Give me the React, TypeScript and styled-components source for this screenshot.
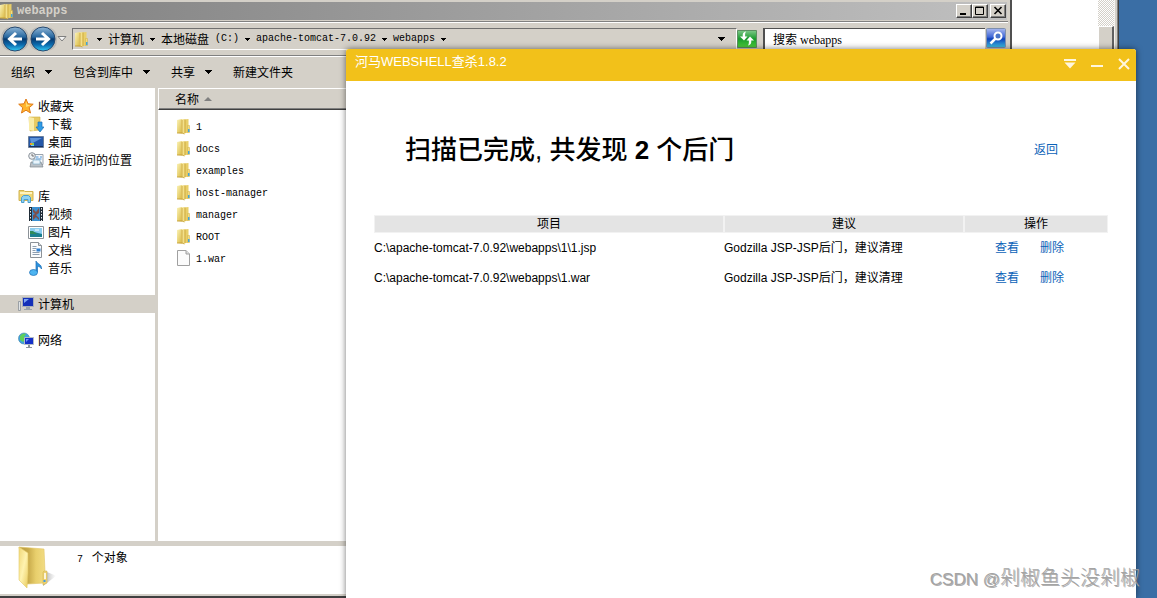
import React from "react";
import styled, { createGlobalStyle, css } from "styled-components";

const face = "#d4d0c8";
const cjk = `"Noto Sans CJK SC", sans-serif`;

const GlobalStyle = createGlobalStyle`
  * { box-sizing: border-box; }
  body { margin: 0; font: 12px/18px ${cjk}; color: #000; }
  button { border: 0; padding: 0; background: none; font: inherit; color: inherit; }
  ul { list-style: none; margin: 0; padding: 0; }
  svg { display: block; flex: none; }
`;

const Desktop = styled.main`
  position: relative;
  min-height: 100vh;
  overflow: hidden;
  background: #3a6ea5;
`;

const Mono = styled.span`
  font-family: "Liberation Mono", ${cjk};
  font-size: 10px;
  white-space: pre;
`;

/* Window at the very back, only its scrollbar edge shows */
const BackWindow = styled.section`
  position: absolute;
  inset: 0 38px 0 50%;
  display: flex;
  justify-content: flex-end;
  background: #fff;
  border-right: 1px solid #404040;
`;
const ScrollTrack = styled.div`
  width: 16px;
  padding-top: 26px;
  background: repeating-conic-gradient(${face} 0 25%, #fff 0 50%) 0 0 / 2px 2px;
`;
const ScrollThumb = styled.div`
  height: 100%;
  background: ${face};
  border: 1px solid #fff;
  border-right: 2px solid #606060;
`;
const BackEdge = styled.div`
  width: 4px;
  background: linear-gradient(90deg, #f4f2ee 0 1px, ${face} 1px 3px, #808080 3px);
`;

/* File explorer */
const Explorer = styled.section`
  position: absolute;
  inset: 0 145px 0 0;
  display: flex;
  flex-direction: column;
  background: ${face};
  padding: 2px 2px 2px 0;
  border-right: 2px solid #505050;
  border-bottom: 2px solid #404040;
`;
const TitleBar = styled.header`
  display: flex;
  align-items: center;
  height: 18px;
  margin-right: 1px;
  padding-right: 1px;
  background: linear-gradient(90deg, #808080, #c0c0c0);
`;
const TitleText = styled.h1`
  flex: 1;
  margin: 0 0 0 4px;
  font: bold 12px/18px "Liberation Mono", monospace;
  color: ${face};
`;
const CaptionButton = styled.button<{ $apart?: boolean }>`
  width: 16px;
  height: 14px;
  margin-left: ${(p) => (p.$apart ? 2 : 0)}px;
  background: ${face};
  border: 1px solid;
  border-color: #fff #404040 #404040 #fff;
  box-shadow: inset -1px -1px #808080;
`;
const etched = css`
  border-top: 1px solid #808080;
  box-shadow: inset 0 1px #fff;
`;
const AddressRow = styled.div`
  ${etched}
  display: flex;
  align-items: flex-start;
  height: 34px;
  margin-top: 1px;
  padding: 6px 2px 0 0;
`;
const NavButtons = styled.div`
  display: flex;
  align-items: center;
  width: 72px;
  height: 22px;
  padding-left: 1px;
`;
const AddressBox = styled.nav`
  display: flex;
  flex: 1;
  align-items: center;
  gap: 1px;
  height: 22px;
  padding-left: 2px;
  border: 1px solid;
  border-color: #707070 #fff #fff #707070;
  overflow: hidden;
  white-space: nowrap;
`;
const Crumb = styled.button`
  display: flex;
  align-items: center;
  height: 18px;
`;
const ArrowCell = styled.span<{ $first?: boolean }>`
  display: flex;
  justify-content: center;
  width: 16px;
  margin-left: ${(p) => (p.$first ? 2 : 0)}px;
`;
const DropButton = styled.button`
  margin: 0 11px 0 auto;
`;
const SquareButton = styled.button`
  width: 20px;
  height: 20px;
`;
const SearchField = styled.input`
  width: 222px;
  height: 21px;
  margin: 0 1px 0 6px;
  padding: 0 8px;
  border: 0 solid #505050;
  border-width: 1px 0 0 2px;
  background: #fff;
  color: #000;
  font: 12px/18px "Liberation Serif", ${cjk};
  outline: none;
`;
const Toolbar = styled.div`
  ${etched}
  display: flex;
  align-items: center;
  gap: 21px;
  height: 33px;
  padding: 0 11px;
`;
const ToolButton = styled.button`
  display: flex;
  align-items: center;
  gap: 9px;
  white-space: nowrap;
`;
const ExplorerBody = styled.div`
  display: flex;
  flex: 1;
  min-height: 0;
`;
const Tree = styled.nav`
  display: flex;
  flex-direction: column;
  gap: 18px;
  width: 158px;
  padding-top: 9px;
  background: #fff;
  border-right: 3px solid ${face};
`;
const TreeItem = styled.li<{ $level?: number; $selected?: boolean }>`
  display: flex;
  align-items: center;
  gap: 4px;
  height: 18px;
  padding-left: ${(p) => (p.$level ? 28 : 18)}px;
  background: ${(p) => (p.$selected ? face : "transparent")};
`;
const Files = styled.section`
  flex: 1;
  background: #fff;
`;
const ColumnHeader = styled.button`
  display: flex;
  align-items: center;
  gap: 5px;
  width: 100%;
  height: 22px;
  padding-left: 16px;
  background: ${face};
  border: 1px solid;
  border-color: #fff ${face} #404040 #fff;
  box-shadow: inset 0 -1px #808080;
`;
const FileList = styled.ul`
  padding: 5px 0 0 19px;
`;
const FileItem = styled.li`
  display: flex;
  align-items: center;
  gap: 6px;
  height: 22px;
`;
const FileName = styled(Mono)`
  padding-top: 4px;
`;
const Details = styled.footer`
  display: flex;
  gap: 20px;
  height: 53px;
  padding-left: 17px;
  background: #fff;
  border-top: 5px solid ${face};
`;
const DetailsText = styled.p`
  margin: 2px 0 0;
`;

/* Scanner */
const Scanner = styled.section`
  position: absolute;
  inset: 49px 21px 0 346px;
  background: #fff;
  border-radius: 3px 3px 0 0;
  box-shadow: 0 0 6px rgba(0, 0, 0, 0.55);
  font-family: "Liberation Sans", ${cjk};
`;
const ScannerBar = styled.header`
  display: flex;
  align-items: center;
  gap: 13px;
  height: 32px;
  padding: 0 5px 2px 9px;
  background: #f2c11a;
  border-radius: 3px 3px 0 0;
  color: #fff;
`;
const ScannerTitle = styled.h2`
  flex: 1;
  margin: 0;
  padding-bottom: 4px;
  font-size: 13px;
  font-weight: 400;
  line-height: 20px;
`;
const Summary = styled.div`
  display: flex;
  align-items: center;
  justify-content: space-between;
  padding: 51px 78px 47px 59px;
`;
const Headline = styled.h3`
  margin: 0;
  font-size: 26px;
  font-weight: 500;
  line-height: 36px;
  white-space: nowrap;
`;
const Link = styled.a`
  color: #0b62b8;
  text-decoration: none;
`;
const Actions = styled.div`
  display: flex;
  gap: 21px;
  padding-left: 31px;
`;
const Results = styled.table`
  width: calc(100% - 56px);
  margin: 0 28px;
  border-collapse: separate;
  border-spacing: 0;
  table-layout: fixed;
`;
const HeadCell = styled.th<{ $width?: number }>`
  width: ${(p) => (p.$width ? `${p.$width}px` : "auto")};
  height: 17px;
  padding: 0;
  background: #e4e4e4;
  border: 1px solid #f2f2f2;
  font-weight: 400;
  line-height: 16px;
`;
const Cell = styled.td`
  height: 30px;
  padding: 0;
  white-space: nowrap;
`;
const Watermark = styled.p`
  position: absolute;
  right: 17px;
  bottom: 4px;
  margin: 0;
  font-size: 20px;
  font-weight: 300;
  line-height: 28px;
  color: #a4a4a4;
  text-shadow: 1px 1px 0 rgba(110, 110, 110, 0.55);
`;
const WatermarkLatin = styled.span`
  font-family: "Liberation Sans", sans-serif;
  font-size: 17px;
`;

const Down = ({ size = 6 }: { size?: number }) => (
  <svg width={size} height={size / 2} viewBox="0 0 8 4" shapeRendering="crispEdges">
    <path d="M0 0h8L4 4z" />
  </svg>
);

const FolderIcon = () => (
  <svg width="13" height="17" viewBox="0 0 13 17">
    <defs>
      <linearGradient id="folderFront" x1="0" x2="1" y1="0" y2="1">
        <stop offset="0" stopColor="#fbf3b8" />
        <stop offset="1" stopColor="#d9b83f" />
      </linearGradient>
    </defs>
    <path d="M0 2 5 1v14.500L0 15z" fill="url(#folderFront)" />
    <path d="M7 1.500 11.500 1v13.500L7 15.500z" fill="#e9cf69" />
    <path d="M4.500 1.500 7.500 1v15l-3-1z" fill="#f3e08a" />
    <path d="M5 2v13M8 1.500V15" stroke="#c6a238" strokeWidth=".8" />
    <path d="M0 15h5l2.500 1" fill="none" stroke="#c09a30" strokeWidth=".8" />
    <path d="M10.500 7.500h2v7h-2z" fill="#f2dc80" stroke="#cfae45" strokeWidth=".5" />
    <path d="M11 11h1.500v3H11z" fill="#3fa4e0" />
  </svg>
);

const FileIcon = () => (
  <svg width="13" height="16" viewBox="0 0 13 16">
    <path d="M.5.5h8.500l3.500 3.500v11.500H.5z" fill="#fbfbfb" stroke="#a0a0a0" />
    <path d="M9 .5V4h3.500" fill="#ddd" stroke="#a0a0a0" />
  </svg>
);

const BigFolder = () => (
  <svg width="40" height="44" viewBox="0 0 40 44">
    <defs>
      <linearGradient id="flap" x1="0" x2="1" y1="0" y2="1">
        <stop offset="0" stopColor="#f0d777" />
        <stop offset=".5" stopColor="#fff3b0" />
        <stop offset="1" stopColor="#e9cb5e" />
      </linearGradient>
      <linearGradient id="inner" x1="0" x2="1">
        <stop offset="0" stopColor="#b99c42" />
        <stop offset=".35" stopColor="#c8aa4a" />
        <stop offset=".65" stopColor="#e8cf6c" />
        <stop offset="1" stopColor="#f2dc83" />
      </linearGradient>
      <linearGradient id="shade" x1="0" x2="1">
        <stop offset="0" stopColor="#777" stopOpacity=".65" />
        <stop offset="1" stopColor="#999" stopOpacity="0" />
      </linearGradient>
    </defs>
    <path d="M27 25c4 1 8 3 12 5l-13 10z" fill="url(#shade)" />
    <path d="M2 1l25 2 1 23v11L10 38z" fill="url(#inner)" stroke="#e0c566" strokeWidth=".6" />
    <path d="M2 1l9 6v20l-1 15-8-8z" fill="url(#flap)" stroke="#e3c968" strokeWidth=".6" />
    <path d="M27 25h3v12l-4 2V26z" fill="#edd273" stroke="#cfae45" strokeWidth=".5" />
    <path d="M28 27v6" stroke="#fff" strokeWidth="1.500" />
    <path d="M27.500 34v2" stroke="#3a9be8" strokeWidth="2" />
  </svg>
);

const Orb = ({ back }: { back?: boolean }) => (
  <svg width="28" height="26" viewBox="0 0 28 26">
    <defs>
      <linearGradient id="orb" x1="0" x2="0" y1="0" y2="1">
        <stop offset="0" stopColor="#8fb5d6" />
        <stop offset=".42" stopColor="#27679f" />
        <stop offset=".5" stopColor="#063a70" />
        <stop offset=".75" stopColor="#0c6db0" />
        <stop offset="1" stopColor="#36cdf5" />
      </linearGradient>
    </defs>
    <rect width="28" height="24" y="1" rx={10} fill="#bcbab6" />
    <circle cx="14" cy="13" r="12" fill="url(#orb)" stroke="#274a70" />
    <path
      d="M21 13H9m6-6-6.500 6 6.500 6"
      transform={back ? undefined : "rotate(180 14 13)"}
      fill="none"
      stroke="#fff"
      strokeWidth="3"
    />
  </svg>
);

const icons: Record<string, React.ReactNode> = {
  star: (
    <>
      <path d="m8 1 2 4.800 5.200.4-4 3.500 1.300 5.300L8 12.200 3.500 15l1.200-5.300-4-3.500L6 5.800z" fill="#ffb52e" stroke="#e07b18" />
      <path d="m8 3 1.300 3.700 3.700.4-4.800 2z" fill="#ffe27a" />
    </>
  ),
  download: (
    <>
      <path d="M1 1h11v13L2 15z" fill="#e8cb63" stroke="#cfae45" strokeWidth=".6" />
      <path d="M1 1l5 1v13l-5-1z" fill="#f9eca8" />
      <path d="M10 6h4v5h2l-4 5-4-5h2z" fill="#2e9be6" stroke="#1b6fb5" strokeWidth=".7" />
    </>
  ),
  desktop: (
    <>
      <path d="M.5 2.500h15v11H.5z" fill="#2457a8" stroke="#6a7f9c" />
      <path d="M2 4h12L3 10z" fill="#5d93da" />
      <path d="M1 12h14v1H1z" fill="#16305e" />
      <path d="M2 9h2v2H2z" fill="#f39a2a" />
      <path d="M4 9h2v2H4z" fill="#8bd04a" />
      <path d="M3 11h3v1H3z" fill="#6ac8ff" />
    </>
  ),
  recent: (
    <>
      <path d="M6 2.500h9v10H6z" fill="#f6f8fa" stroke="#9aa3ad" />
      <path d="M7.500 5h3M7.500 7h6M12 5h2" stroke="#4a93d8" />
      <path d="M3 10h10l2 5H2z" fill="#b9c0c6" stroke="#7e868e" strokeWidth=".7" />
      <path d="M5 8h7v4H5z" fill="#e9f4fb" stroke="#7ba7c5" strokeWidth=".6" />
      <circle cx="4" cy="4" r="3.300" fill="#eef1f3" stroke="#8a929a" />
      <path d="M4 2v2h2" fill="none" stroke="#555" strokeWidth=".8" />
    </>
  ),
  library: (
    <>
      <path d="M1 2.500h5l1 1h8v9H1z" fill="#eed676" stroke="#d1b34e" />
      <path d="M2 5h12" stroke="#fff3bd" strokeWidth="2" />
      <path d="M3.500 14.500v-5l2-2h5l2 2v5H10v-3H6v3z" fill="#8fd2f2" stroke="#4a9fd0" />
    </>
  ),
  video: (
    <>
      <path d="M1 1h14v14H1z" fill="#1f2b36" />
      <path d="M4 1h8v14H4z" fill="#3b8fd0" />
      <path d="m5 3 3 3 3-4v5L8 9l3 3v2L8 11l-3 3V9l2-1-2-2z" fill="#7d4f4a" />
      <path d="M2.500 2v13M13.500 2v13" stroke="#e8edf0" strokeDasharray="1.500 1.500" />
    </>
  ),
  picture: (
    <>
      <path d="M.5 2.500h15v12H.5z" fill="#fff" stroke="#8c9298" />
      <path d="M2 4h12v9H2z" fill="#8ccdf0" />
      <path d="m2 9 4-1 8 2v3H2z" fill="#1c7f90" />
      <path d="m2 7 3 0 4 3H2z" fill="#2f8a5b" />
      <path d="M7 6h4" stroke="#fff" />
    </>
  ),
  document: (
    <>
      <path d="M2.500.5h8l3 3v12h-11z" fill="#fbfcfd" stroke="#8c9298" />
      <path d="M10.500.5v3h3" fill="#d8dde2" stroke="#8c9298" />
      <path d="M4.500 4.500h4M4.500 6.500h4M4.500 8.500h3M4.500 10.500h7M4.500 12.500h7" stroke="#8d9eb0" />
      <path d="M8.500 6.500h4v3h-4z" fill="#2d7fd0" />
    </>
  ),
  music: (
    <>
      <path d="M8 1c1 3 6 3 5.500 8C12.500 7 11 6.500 9.500 6.500V12H8z" fill="#2c93df" stroke="#1a6db5" strokeWidth=".7" />
      <ellipse cx="5.500" cy="12.500" rx="4" ry="3" fill="#4db4f0" stroke="#1a6db5" strokeWidth=".7" />
    </>
  ),
  computer: (
    <>
      <path d="M.5 5.500h2v9h-2z" fill="#dfe3e6" stroke="#8c9298" strokeWidth=".8" />
      <path d="M4.500 1.500h11v9h-11z" fill="#1530b8" stroke="#a9b0b8" />
      <path d="M6 3h5L6 7z" fill="#7ea5f2" />
      <path d="M8 11h4v2H8zM6 13h8v1H6z" fill="#9ca4ab" />
    </>
  ),
  network: (
    <>
      <circle cx="6" cy="6.500" r="5.500" fill="#3fa4de" stroke="#4a87a8" strokeWidth=".6" />
      <path d="M2 4c2-3 5-3 6-2L6 5l2 2-3 3-3-2z" fill="#5fd05a" />
      <path d="M6.500 5.500h9v7h-9z" fill="#1530c8" stroke="#b3bcc6" />
      <path d="M8 7h3l-3 3z" fill="#6f93f5" />
      <path d="M10 13h2v2h2v1H8v-1h2z" fill="#8c949c" />
    </>
  ),
};

const TreeIcon = ({ name }: { name: string }) => (
  <svg width="16" height="16" viewBox="0 0 16 16">
    {icons[name]}
  </svg>
);

type Node = { icon: string; label: string; level?: number; selected?: boolean };
const tree: Node[][] = [
  [
    { icon: "star", label: "收藏夹" },
    { icon: "download", label: "下载", level: 1 },
    { icon: "desktop", label: "桌面", level: 1 },
    { icon: "recent", label: "最近访问的位置", level: 1 },
  ],
  [
    { icon: "library", label: "库" },
    { icon: "video", label: "视频", level: 1 },
    { icon: "picture", label: "图片", level: 1 },
    { icon: "document", label: "文档", level: 1 },
    { icon: "music", label: "音乐", level: 1 },
  ],
  [{ icon: "computer", label: "计算机", selected: true }],
  [{ icon: "network", label: "网络" }],
];

const files = ["1", "docs", "examples", "host-manager", "manager", "ROOT", "1.war"];

const crumbs: React.ReactNode[] = [
  "计算机",
  <React.Fragment key="c">本地磁盘<Mono>{" (C:)"}</Mono></React.Fragment>,
  <Mono key="t">apache-tomcat-7.0.92</Mono>,
  <Mono key="w">webapps</Mono>,
];

const tools = [
  { label: "组织", menu: true },
  { label: "包含到库中", menu: true },
  { label: "共享", menu: true },
  { label: "新建文件夹", menu: false },
];

const results = ["C:\\apache-tomcat-7.0.92\\webapps\\1\\1.jsp", "C:\\apache-tomcat-7.0.92\\webapps\\1.war"];

export default function App() {
  return (
    <Desktop>
      <GlobalStyle />
      <BackWindow>
        <ScrollTrack>
          <ScrollThumb />
        </ScrollTrack>
        <BackEdge />
      </BackWindow>

      <Explorer>
        <TitleBar>
          <FolderIcon />
          <TitleText>webapps</TitleText>
          <CaptionButton aria-label="最小化">
            <svg width="14" height="12"><path d="M3 8h6v2H3z" /></svg>
          </CaptionButton>
          <CaptionButton aria-label="最大化">
            <svg width="14" height="12"><path d="M2.500 2h8v7.500h-8zM2 2.500h9" fill="none" stroke="#000" /></svg>
          </CaptionButton>
          <CaptionButton $apart aria-label="关闭">
            <svg width="14" height="12"><path d="m3.500 2 7 7m0-7-7 7" stroke="#000" strokeWidth="1.600" /></svg>
          </CaptionButton>
        </TitleBar>

        <AddressRow>
          <NavButtons>
            <button aria-label="后退"><Orb back /></button>
            <button aria-label="前进"><Orb /></button>
            <button aria-label="历史">
              <svg width="10" height="6" viewBox="0 0 10 6">
                <path d="M1 .5h8L5 5z" fill="#f4f4f4" stroke="#808080" />
              </svg>
            </button>
          </NavButtons>
          <AddressBox aria-label="地址">
            <FolderIcon />
            <ArrowCell $first><Down /></ArrowCell>
            {crumbs.map((c, i) => (
              <Crumb key={i}>
                {c}
                <ArrowCell><Down /></ArrowCell>
              </Crumb>
            ))}
            <DropButton aria-label="展开"><Down size={8} /></DropButton>
          </AddressBox>
          <SquareButton aria-label="刷新">
            <svg width="20" height="20" viewBox="0 0 20 20">
              <defs>
                <linearGradient id="go" x1="0" x2="0" y1="0" y2="1">
                  <stop offset="0" stopColor="#7fc98a" />
                  <stop offset=".5" stopColor="#189a2c" />
                  <stop offset="1" stopColor="#4fd23c" />
                </linearGradient>
              </defs>
              <path d="M.5 2.500h19v17H.5z" fill="url(#go)" stroke="#5d8f62" />
              <path d="M9 3.500C6 4 5.500 6 5.800 8.500H3l4 4 3.500-4H8.200C8 6.500 8 5 9 3.500z" fill="#fff" />
              <path d="M11 17.500c3-.5 3.500-2.500 3.200-5H17l-4-4-3.500 4h2.300c.2 2 .2 3.500-.8 5z" fill="#fff" />
            </svg>
          </SquareButton>
          <SearchField aria-label="搜索" defaultValue="搜索 webapps" />
          <SquareButton aria-label="开始搜索">
            <svg width="20" height="20" viewBox="0 0 20 20">
              <defs>
                <linearGradient id="find" x1="0" x2="0" y1="0" y2="1">
                  <stop offset="0" stopColor="#a9b9ef" />
                  <stop offset=".45" stopColor="#3f66d6" />
                  <stop offset=".55" stopColor="#0d3fb8" />
                  <stop offset="1" stopColor="#3fc6e8" />
                </linearGradient>
              </defs>
              <rect x=".5" y=".5" width="19" height="19" rx="1" fill="url(#find)" stroke="#7d8fae" />
              <circle cx="12" cy="8" r="3.500" fill="#4a74c8" stroke="#fff" strokeWidth="2" />
              <path d="m9.500 10.500-5 5" stroke="#fff" strokeWidth="2.500" />
            </svg>
          </SquareButton>
        </AddressRow>

        <Toolbar>
          {tools.map((t) => (
            <ToolButton key={t.label}>
              {t.label}
              {t.menu && <Down size={8} />}
            </ToolButton>
          ))}
        </Toolbar>

        <ExplorerBody>
          <Tree>
            {tree.map((group, i) => (
              <ul key={i}>
                {group.map((n) => (
                  <TreeItem key={n.label} $level={n.level} $selected={n.selected}>
                    <TreeIcon name={n.icon} />
                    {n.label}
                  </TreeItem>
                ))}
              </ul>
            ))}
          </Tree>
          <Files>
            <ColumnHeader>
              名称
              <svg width="8" height="4" viewBox="0 0 8 4"><path d="M0 4h8L4 0z" fill="#808080" /></svg>
            </ColumnHeader>
            <FileList>
              {files.map((name) => (
                <FileItem key={name}>
                  {name.endsWith(".war") ? <FileIcon /> : <FolderIcon />}
                  <FileName>{name}</FileName>
                </FileItem>
              ))}
            </FileList>
          </Files>
        </ExplorerBody>

        <Details>
          <BigFolder />
          <DetailsText><Mono>{"7 "}</Mono> 个对象</DetailsText>
        </Details>
      </Explorer>

      <Scanner>
        <ScannerBar>
          <ScannerTitle>河马WEBSHELL查杀1.8.2</ScannerTitle>
          <button aria-label="菜单">
            <svg width="14" height="12" viewBox="0 0 14 12"><path d="M1 1h12v2H1zM1.500 4.500h11L7 10.500z" fill="#fff6dc" /></svg>
          </button>
          <button aria-label="最小化">
            <svg width="14" height="12" viewBox="0 0 14 12"><path d="M1 7h12v2H1z" fill="#fff6dc" /></svg>
          </button>
          <button aria-label="关闭">
            <svg width="14" height="12" viewBox="0 0 14 12"><path d="m2 1 10 10M12 1 2 11" stroke="#fff6dc" strokeWidth="2" /></svg>
          </button>
        </ScannerBar>
        <Summary>
          <Headline>扫描已完成, 共发现 <strong>2</strong> 个后门</Headline>
          <Link href="#back">返回</Link>
        </Summary>
        <Results>
          <thead>
            <tr>
              <HeadCell>项目</HeadCell>
              <HeadCell $width={240}>建议</HeadCell>
              <HeadCell $width={144}>操作</HeadCell>
            </tr>
          </thead>
          <tbody>
            {results.map((path) => (
              <tr key={path}>
                <Cell>{path}</Cell>
                <Cell>Godzilla JSP-JSP后门，建议清理</Cell>
                <Cell>
                  <Actions>
                    <Link href="#view">查看</Link>
                    <Link href="#delete">删除</Link>
                  </Actions>
                </Cell>
              </tr>
            ))}
          </tbody>
        </Results>
      </Scanner>

      <Watermark><WatermarkLatin>CSDN @</WatermarkLatin>剁椒鱼头没剁椒</Watermark>
    </Desktop>
  );
}
